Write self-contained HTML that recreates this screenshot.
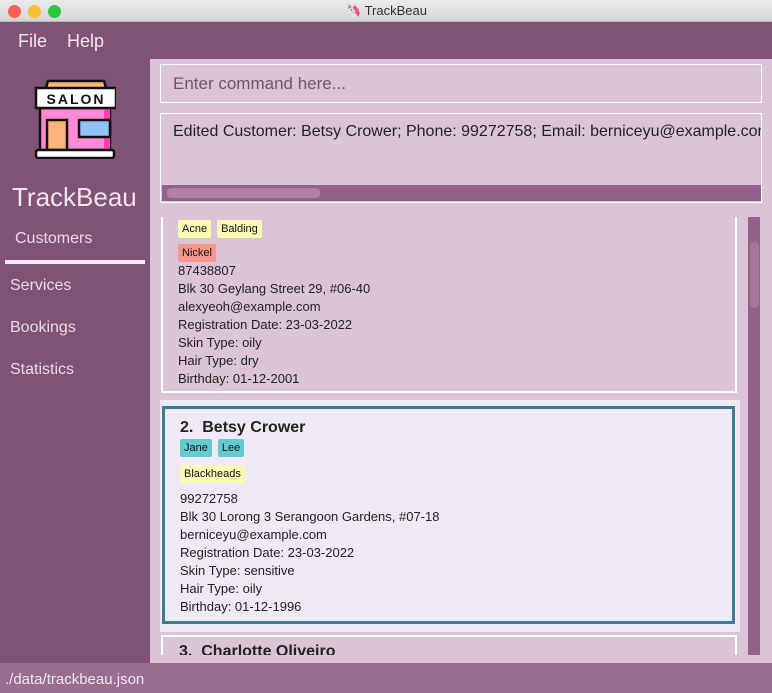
<!DOCTYPE html>
<html><head><style>
*{margin:0;padding:0;box-sizing:border-box}
body{width:772px;height:693px;overflow:hidden;background:#7f5276;font-family:"Liberation Sans",sans-serif;position:relative}
.abs{position:absolute}
.title{left:0;top:0;width:772px;height:22px;background:linear-gradient(#ebebeb,#d5d5d5);border-bottom:1px solid #b8b8b8;text-align:center;font-size:13px;line-height:22px;color:#333}
.dot{top:5px;width:13px;height:13px;border-radius:50%}
.menu{color:#f2e8f0;font-size:18px;top:31px}
.side{color:#eadbe6;font-size:16px;left:10px}
.panel{left:150px;top:59px;width:622px;height:604px;background:#dac4d6}
.box{border:1px solid #fff}
.txt{font-size:13px;color:#222;line-height:18px}
.tag{display:inline-block;font-size:11px;padding:2px 4px;border-radius:2px;margin-right:6px;color:#111;line-height:14px}
.y{background:#fafab4}.r{background:#f5978a}.c{background:#63cbcf}
</style></head><body>
<div class="abs title">🦄 TrackBeau</div>
<div class="abs dot" style="left:8px;background:#fe5f57"></div>
<div class="abs dot" style="left:28px;background:#febc2e"></div>
<div class="abs dot" style="left:48px;background:#28c840"></div>
<div class="abs menu" style="left:18px">File</div>
<div class="abs menu" style="left:67px">Help</div>

<svg class="abs" style="left:34px;top:79px" width="82" height="80" viewBox="0 0 82 80">
<path d="M11 12 L14 2 H70 L73 12 Z" fill="#fbb57a" stroke="#111" stroke-width="2.5"/>
<rect x="6" y="29" width="70" height="42" fill="#ff8ad8" stroke="#111" stroke-width="2.5"/>
<rect x="70" y="29" width="6" height="42" fill="#ff3fb4"/>
<rect x="2" y="9" width="80" height="20" fill="#fff" stroke="#111" stroke-width="2.5"/>
<text x="42" y="25" font-size="14" font-weight="bold" text-anchor="middle" font-family="Liberation Sans" letter-spacing="2" fill="#111">SALON</text>
<rect x="13" y="41" width="20" height="30" fill="#fbb57a" stroke="#111" stroke-width="2.5"/>
<rect x="45" y="41" width="31" height="17" fill="#92c3f8" stroke="#111" stroke-width="2.5"/>
<rect x="2" y="71" width="78" height="8" rx="2" fill="#fff" stroke="#111" stroke-width="2.5"/>
</svg>
<div class="abs" style="left:12px;top:182px;font-size:26px;color:#f0e4ee">TrackBeau</div>
<div class="abs side" style="left:15px;top:230px">Customers</div>
<div class="abs" style="left:5px;top:260px;width:140px;height:4px;background:#f2ebf2"></div>
<div class="abs side" style="top:277px">Services</div>
<div class="abs side" style="top:319px">Bookings</div>
<div class="abs side" style="top:361px">Statistics</div>

<div class="abs panel"></div>
<div class="abs box" style="left:160px;top:64px;width:602px;height:39px;padding:9px 12px;font-size:17px;color:#6a5a68">Enter command here...</div>
<div class="abs box" style="left:160px;top:113px;width:602px;height:90px;overflow:hidden">
<div style="padding:9px 12px;font-size:16px;color:#222;white-space:nowrap">Edited Customer: Betsy Crower; Phone: 99272758; Email: berniceyu@example.com</div>
<div class="abs" style="left:1px;top:71px;width:600px;height:16px;background:#93618a"></div>
<div class="abs" style="left:6px;top:74px;width:153px;height:10px;border-radius:4px;background:#b07fa4"></div>
</div>

<div class="abs" style="left:160px;top:217px;width:585px;height:438px;overflow:hidden">
<div class="abs" style="left:1px;top:-5px;width:576px;height:181px;border:2px solid #fff;border-top:none;padding:6px 15px" >
<div class="txt" style="padding-top:1px"><span class="tag y">Acne</span><span class="tag y">Balding</span></div>
<div class="txt" style="margin-top:5px"><span class="tag r">Nickel</span></div>
<div class="txt">87438807<br>Blk 30 Geylang Street 29, #06-40<br>alexyeoh@example.com<br>Registration Date: 23-03-2022<br>Skin Type: oily<br>Hair Type: dry<br>Birthday: 01-12-2001</div>
</div>
<div class="abs" style="left:0;top:183px;width:580px;height:232px;background:#efe9f5"></div>
<div class="abs" style="left:2px;top:189px;width:573px;height:218px;border:3px solid #3e7b8e;padding:9px 15px 6px">
<div style="font-size:16px;font-weight:bold;color:#222;line-height:20px">2.&nbsp; Betsy Crower</div>
<div class="txt"><span class="tag c">Jane</span><span class="tag c">Lee</span></div>
<div class="txt" style="margin-top:7px"><span class="tag y">Blackheads</span></div>
<div class="txt" style="margin-top:7px">99272758<br>Blk 30 Lorong 3 Serangoon Gardens, #07-18<br>berniceyu@example.com<br>Registration Date: 23-03-2022<br>Skin Type: sensitive<br>Hair Type: oily<br>Birthday: 01-12-1996</div>
</div>
<div class="abs" style="left:1px;top:418px;width:576px;height:40px;border:2px solid #fff;border-bottom:none;background:#dac4d6;padding:6px 16px;font-size:16px;font-weight:bold;color:#222">3.&nbsp; Charlotte Oliveiro</div>
</div>
<div class="abs" style="left:748px;top:217px;width:12px;height:438px;background:#93618a"></div>
<div class="abs" style="left:750px;top:242px;width:9px;height:66px;border-radius:4px;background:#a57699"></div>

<div class="abs" style="left:0;top:663px;width:772px;height:30px;background:#9a6c8f;color:#f0e6ee;font-size:15px;padding:8px 5px">./data/trackbeau.json</div>
</body></html>
